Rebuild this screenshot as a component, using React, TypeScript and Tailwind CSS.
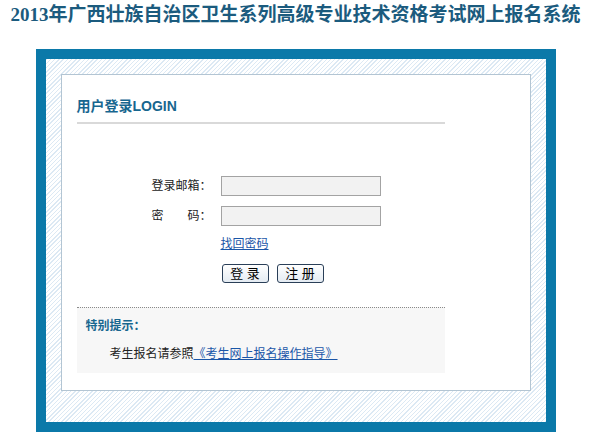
import { useState } from 'react';

export default function App() {
  const [email, setEmail] = useState('');
  const [password, setPassword] = useState('');

  return (
    <div className="w-[591px] h-[438px] bg-white font-['Liberation_Sans','Noto_Sans_CJK_SC',sans-serif] text-[12px] text-[#222]">
      {/* Title */}
      <div className="h-[49px] pt-[3px] text-center">
        <h1 className="text-[19px] leading-[24px] font-bold text-[#1b5b7e] font-['Liberation_Serif','Noto_Sans_CJK_SC',serif]">
          2013年广西壮族自治区卫生系列高级专业技术资格考试网上报名系统
        </h1>
      </div>

      {/* Frame */}
      <div className="w-[520px] mx-auto border-[10px] border-[#0b79a9] px-[15px] pt-[15px] pb-[31px] bg-[repeating-linear-gradient(135deg,#dce9f4_0px,#dce9f4_1px,#ffffff_1px,#ffffff_3px)]">
        <div className="h-[317px] border border-[#b3c5d3] bg-white pl-[15px]">
          <div className="w-[368px]">
            {/* Heading */}
            <h2 className="mt-[21px] text-[14px] leading-[20px] font-bold text-[#17668f]">用户登录LOGIN</h2>
            <div className="mt-[6px] h-[2px] bg-[#d9d9d9]" />

            {/* Form */}
            <div className="mt-[52px] pl-[75px]">
              <div className="flex items-center gap-[9px]">
                <label htmlFor="email" className="w-[60px] text-right leading-[20px]">登录邮箱：</label>
                <input
                  id="email"
                  type="text"
                  value={email}
                  onChange={(e) => setEmail(e.target.value)}
                  className="w-[160px] h-[20px] border border-[#a3a3a3] bg-[#f2f2f2] px-1 outline-none"
                />
              </div>
              <div className="mt-[10px] flex items-center gap-[9px]">
                <label htmlFor="password" className="w-[60px] text-right leading-[20px]">密　　码：</label>
                <input
                  id="password"
                  type="password"
                  value={password}
                  onChange={(e) => setPassword(e.target.value)}
                  className="w-[160px] h-[20px] border border-[#a3a3a3] bg-[#f2f2f2] px-1 outline-none"
                />
              </div>
              <div className="pl-[69px]">
                <a href="#" className="block mt-[10px] leading-[16px] text-[#1a56a8] underline">找回密码</a>
                <div className="mt-[12px] flex gap-[8px] pl-[1px]">
                  <button className="w-[47px] h-[19px] rounded-[3px] border border-[#2a3f58] bg-[linear-gradient(#ffffff,#e4ebf2)] text-[13px] leading-[17px] text-black">登 录</button>
                  <button className="w-[47px] h-[19px] rounded-[3px] border border-[#2a3f58] bg-[linear-gradient(#ffffff,#e4ebf2)] text-[13px] leading-[17px] text-black">注 册</button>
                </div>
              </div>
            </div>

            {/* Notice */}
            <div className="mt-[24px] border-t border-dotted border-[#8a8a8a] bg-[#f7f7f7] pt-[8px] pb-[9px] pl-[9px]">
              <p className="leading-[20px] font-bold text-[#17668f]">特别提示：</p>
              <p className="mt-[8px] leading-[20px] pl-[24px] text-[#222]">
                考生报名请参照<a href="#" className="text-[#1a56a8] underline">《考生网上报名操作指导》</a>
              </p>
            </div>
          </div>
        </div>
      </div>
    </div>
  );
}
